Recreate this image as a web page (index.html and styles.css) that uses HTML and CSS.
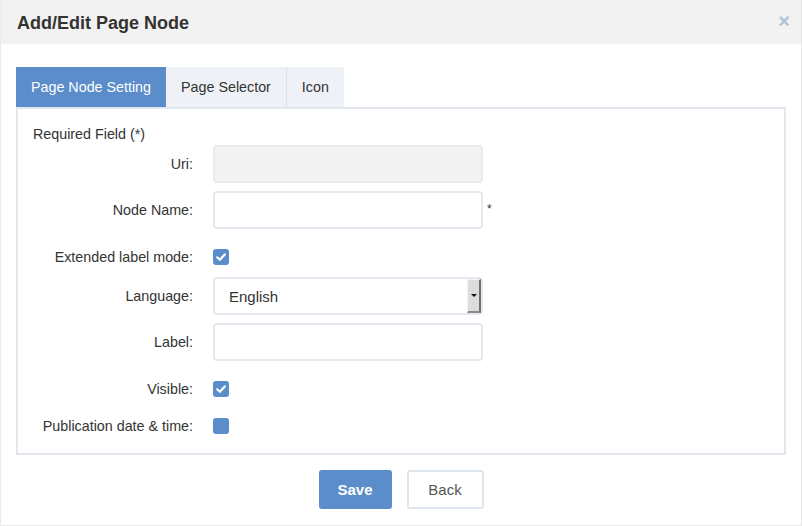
FILE: index.html
```html
<!DOCTYPE html>
<html>
<head>
<meta charset="utf-8">
<link rel="stylesheet" href="styles.css">
</head>
<body>
<div class="modal">
  <div class="modal-header">
    <h1 class="title">Add/Edit Page Node</h1>
    <span class="close">×</span>
  </div>
  <div class="modal-body">
    <div class="tabs">
      <div class="tab active">Page Node Setting</div>
      <div class="tab">Page Selector</div>
      <div class="tab tab-sep">Icon</div>
    </div>
    <div class="panel">
      <div class="required">Required Field (*)</div>
      <div class="form">
        <div class="row">
          <label class="lbl">Uri:</label>
          <div class="input disabled"></div>
        </div>
        <div class="row">
          <label class="lbl">Node Name:</label>
          <div class="input"></div>
          <span class="star">*</span>
        </div>
        <div class="row row-check row-ext">
          <label class="lbl">Extended label mode:</label>
          <span class="check"><svg viewBox="0 0 16 16" width="16" height="16"><path d="M4.2 8.3 L6.8 10.8 L11.8 5.4" fill="none" stroke="#fff" stroke-width="2.2" stroke-linecap="round" stroke-linejoin="round"/></svg></span>
        </div>
        <div class="row">
          <label class="lbl">Language:</label>
          <div class="input select"><span class="select-text">English</span><span class="drop"><span class="arrow"></span></span></div>
        </div>
        <div class="row">
          <label class="lbl">Label:</label>
          <div class="input"></div>
        </div>
        <div class="row row-check row-vis">
          <label class="lbl">Visible:</label>
          <span class="check"><svg viewBox="0 0 16 16" width="16" height="16"><path d="M4.2 8.3 L6.8 10.8 L11.8 5.4" fill="none" stroke="#fff" stroke-width="2.2" stroke-linecap="round" stroke-linejoin="round"/></svg></span>
        </div>
        <div class="row row-check row-pub">
          <label class="lbl">Publication date &amp; time:</label>
          <span class="check"></span>
        </div>
      </div>
    </div>
    <div class="actions">
      <button class="btn btn-primary">Save</button>
      <button class="btn btn-default">Back</button>
    </div>
  </div>
</div>
</body>
</html>
```
FILE: styles.css
```css
* { box-sizing: border-box; }
html, body { margin: 0; padding: 0; background: #fff; }
body { font-family: "Liberation Sans", Arial, sans-serif; color: #333; }
.modal {
  width: 802px;
  height: 526px;
  border-left: 1px solid #ececec;
  border-bottom: 1px solid #ececec;
  border-right: 1px solid #e4e4e4;
  overflow: hidden;
}
.modal-header {
  height: 44px;
  background: #f2f2f2;
  display: flex;
  align-items: center;
  justify-content: space-between;
  padding: 1px 11px 0 16px;
}
.title {
  margin: 0;
  font-size: 18px;
  font-weight: bold;
  color: #333;
  line-height: 22px;
}
.close {
  font-size: 20px;
  font-weight: bold;
  color: #aec3dc;
  line-height: 20px;
  margin-top: -4px;
}
.modal-body {
  padding: 23px 15px 0 15px;
}
.tabs {
  display: flex;
  height: 40px;
}
.tab {
  height: 40px;
  line-height: 40px;
  padding: 0 15px;
  font-size: 14.3px;
  background: #eef2f6;
  color: #333;
}
.tab.active {
  background: #5a8dc9;
  color: #fff;
}
.tab-sep { border-left: 1px solid #dce3ea; }
.panel {
  border: 2px solid #e1e7ed;
  height: 348px;
  padding: 14px 15px 0 15px;
}
.required {
  font-size: 14.3px;
  line-height: 20px;
  height: 20px;
  padding-top: 1px;
}
.form {
  display: flex;
  flex-direction: column;
  gap: 8px;
  margin-top: 2px;
}
.row {
  display: flex;
  align-items: center;
  height: 38px;
}
.row-check { height: 32px; }
.row-ext { margin-top: 4px; margin-bottom: -4px; }
.row-vis { margin-top: 4px; margin-bottom: -4px; }
.row-pub { margin-top: 1px; }
.lbl {
  width: 160px;
  text-align: right;
  font-size: 14.3px;
  color: #333;
  margin-right: 20px;
}
.input {
  width: 270px;
  height: 38px;
  border: 2px solid #e3e9ef;
  border-radius: 4px;
  background: #fff;
}
.input.disabled { background: #f2f2f2; border-color: #e6ebf0; }
.star {
  font-size: 12px;
  margin-left: 4px;
  margin-top: -2px;
  color: #333;
}
.select {
  display: flex;
  align-items: center;
  justify-content: space-between;
  padding: 1px 0 1px 14px;
}
.select-text { font-size: 15px; color: #333; }
.drop {
  width: 14px;
  height: 34px;
  background: #dcdcdc;
  border-right: 2px solid #707070;
  border-bottom: 2px solid #8a8a8a;
  border-top: 1px solid #f4f4f4;
  border-left: 1px solid #f4f4f4;
  display: flex;
  align-items: center;
  justify-content: center;
}
.arrow {
  width: 0;
  height: 0;
  border-left: 3px solid transparent;
  border-right: 3px solid transparent;
  border-top: 3px solid #111;
}
.check {
  width: 16px;
  height: 16px;
  border-radius: 3px;
  background: #5a8dc9;
  display: inline-flex;
}
.check svg { display: block; }
.actions {
  display: flex;
  justify-content: center;
  gap: 15px;
  margin-top: 15px;
}
.btn {
  height: 39px;
  font-family: "Liberation Sans", Arial, sans-serif;
  font-size: 15px;
  border-radius: 3px;
  cursor: pointer;
}
.btn-primary {
  width: 73px;
  background: #5a8dc9;
  color: #fff;
  border: none;
  font-weight: bold;
}
.btn-default {
  width: 77px;
  background: #fff;
  color: #555;
  border: 2px solid #dfe6ed;
}
```
